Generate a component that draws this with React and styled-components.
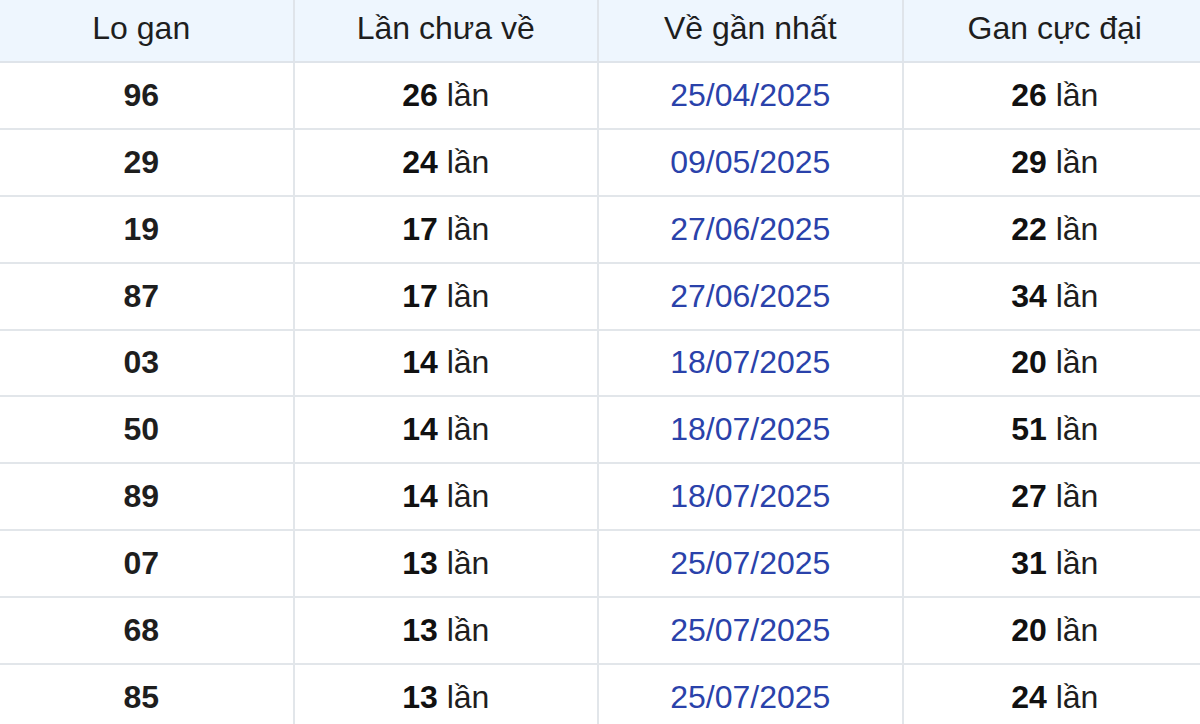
import React from "react";
import styled, { createGlobalStyle } from "styled-components";

const Global = createGlobalStyle`
  html, body { margin: 0; padding: 0; background: #ffffff; }
  body { overflow: hidden; width: 1200px; height: 724px; }
`;

const Frame = styled.div`
  width: 1200px;
  height: 724px;
  overflow: hidden;
  background: #ffffff;
`;

const Table = styled.table`
  border-collapse: collapse;
  table-layout: fixed;
  width: 1220px;
  margin: -6px 0 0 -12px;
  font-family: "Liberation Sans", Arial, sans-serif;
  font-size: 32px;
`;

const HeadCell = styled.th`
  height: 65px;
  padding: 0;
  border: 2px solid #dfe4ea;
  background: #eef6fe;
  color: #1e1e1e;
  font-weight: 400;
  text-align: center;
  vertical-align: middle;
`;

const Cell = styled.td`
  height: 64.88px;
  padding: 0;
  border: 2px solid #e2e6ea;
  text-align: center;
  vertical-align: middle;
  color: ${(p) => (p.$date ? "#2a42aa" : "#1e1e1e")};
  font-weight: ${(p) => (p.$bold ? 700 : 400)};
`;

const Num = styled.b`
  font-weight: 700;
  color: #111111;
`;

const rows = [
  ["96", "26", "25/04/2025", "26"],
  ["29", "24", "09/05/2025", "29"],
  ["19", "17", "27/06/2025", "22"],
  ["87", "17", "27/06/2025", "34"],
  ["03", "14", "18/07/2025", "20"],
  ["50", "14", "18/07/2025", "51"],
  ["89", "14", "18/07/2025", "27"],
  ["07", "13", "25/07/2025", "31"],
  ["68", "13", "25/07/2025", "20"],
  ["85", "13", "25/07/2025", "24"],
];

export default function App() {
  return (
    <Frame>
      <Global />
      <Table>
        <thead>
          <tr>
            <HeadCell>Lo gan</HeadCell>
            <HeadCell>Lần chưa về</HeadCell>
            <HeadCell>Về gần nhất</HeadCell>
            <HeadCell>Gan cực đại</HeadCell>
          </tr>
        </thead>
        <tbody>
          {rows.map((r) => (
            <tr key={r[0]}>
              <Cell $bold>{r[0]}</Cell>
              <Cell>
                <Num>{r[1]}</Num> lần
              </Cell>
              <Cell $date>{r[2]}</Cell>
              <Cell>
                <Num>{r[3]}</Num> lần
              </Cell>
            </tr>
          ))}
        </tbody>
      </Table>
    </Frame>
  );
}
